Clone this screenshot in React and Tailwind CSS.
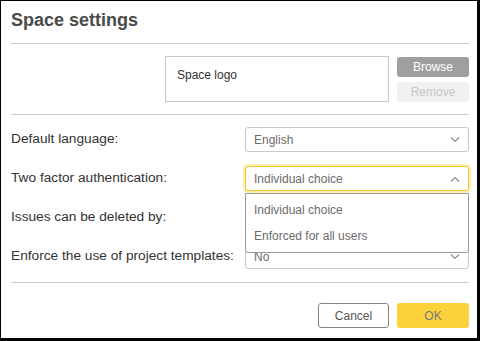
import React from "react";

const Chevron = ({ up }) => (
  <svg width="10" height="6" viewBox="0 0 10 6" className="shrink-0">
    <path
      d={up ? "M1 5.5 L5 1.5 L9 5.5" : "M1 0.5 L5 4.5 L9 0.5"}
      fill="none"
      stroke="#8a8a8a"
      strokeWidth="1.1"
    />
  </svg>
);

function Select({ value, focused, up }) {
  return (
    <div
      className={
        "w-[224px] h-[25px] rounded-[3px] flex items-center justify-between pl-[8px] pr-[8px] bg-white " +
        (focused
          ? "border border-[#f7c72f] shadow-[0_0_0_2px_#fbeeb5]"
          : "border border-[#c8c8c8]")
      }
    >
      <span className="text-[12px] text-[#6b6b6b] leading-none">{value}</span>
      <Chevron up={up} />
    </div>
  );
}

function Row({ label, children }) {
  return (
    <div className="flex items-center justify-between h-[25px]">
      <span className="text-[13.7px] text-[#333333]">{label}</span>
      {children}
    </div>
  );
}

export default function App() {
  return (
    <div
      className="w-[480px] h-[341px] bg-black pt-[1px] pl-[1px]"
      style={{ fontFamily: '"Liberation Sans", Arial, sans-serif' }}
    >
      <div className="w-[476px] h-[337px] bg-white pt-[7px] pl-[10px] pr-[8px] flex flex-col">
        <div className="h-[24px] leading-[24px] text-[18px] font-bold text-[#4a4a4a]">
          Space settings
        </div>
        <div className="mt-[11px] h-px bg-[#cccccc]" />

        <div className="mt-[12px] flex justify-end items-start gap-[8px]">
          <div className="w-[224px] h-[46px] border border-[#c8c8c8] pt-[10px] pl-[11px]">
            <div className="text-[12px] leading-[16px] text-[#333333]">Space logo</div>
          </div>
          <div className="flex flex-col gap-[5px] mt-[1px]">
            <div className="w-[72px] h-[20px] rounded-[3px] bg-[#9f9f9f] text-white text-[12px] flex items-center justify-center">
              Browse
            </div>
            <div className="w-[72px] h-[20px] rounded-[3px] bg-[#f1f1f1] text-[#c6c6c6] text-[12px] flex items-center justify-center">
              Remove
            </div>
          </div>
        </div>

        <div className="mt-[12px] h-px bg-[#cccccc]" />

        <div className="mt-[12px] flex flex-col gap-[14px] relative">
          <Row label="Default language:">
            <Select value="English" />
          </Row>
          <Row label="Two factor authentication:">
            <div className="relative">
              <Select value="Individual choice" focused up />
              <div className="absolute left-0 top-[27px] w-[224px] z-10 bg-white border border-[#9a9a9a] rounded-b-[3px] pt-[3px] pb-[3px]">
                <div className="h-[26px] flex items-center pl-[8px] text-[12px] text-[#6b6b6b]">
                  Individual choice
                </div>
                <div className="h-[26px] flex items-center pl-[8px] text-[12px] text-[#6b6b6b]">
                  Enforced for all users
                </div>
              </div>
            </div>
          </Row>
          <Row label="Issues can be deleted by:">
            <Select value="" />
          </Row>
          <Row label="Enforce the use of project templates:">
            <Select value="No" />
          </Row>
        </div>

        <div className="mt-[13px] h-px bg-[#cccccc]" />

        <div className="mt-[20px] flex justify-end gap-[8px]">
          <div className="w-[71px] h-[25px] rounded-[3px] border border-[#858585] bg-white text-[#555555] text-[12px] flex items-center justify-center">
            Cancel
          </div>
          <div className="w-[72px] h-[25px] rounded-[3px] bg-[#fcd13b] text-[#7a7a7a] text-[12px] flex items-center justify-center">
            OK
          </div>
        </div>
      </div>
    </div>
  );
}
